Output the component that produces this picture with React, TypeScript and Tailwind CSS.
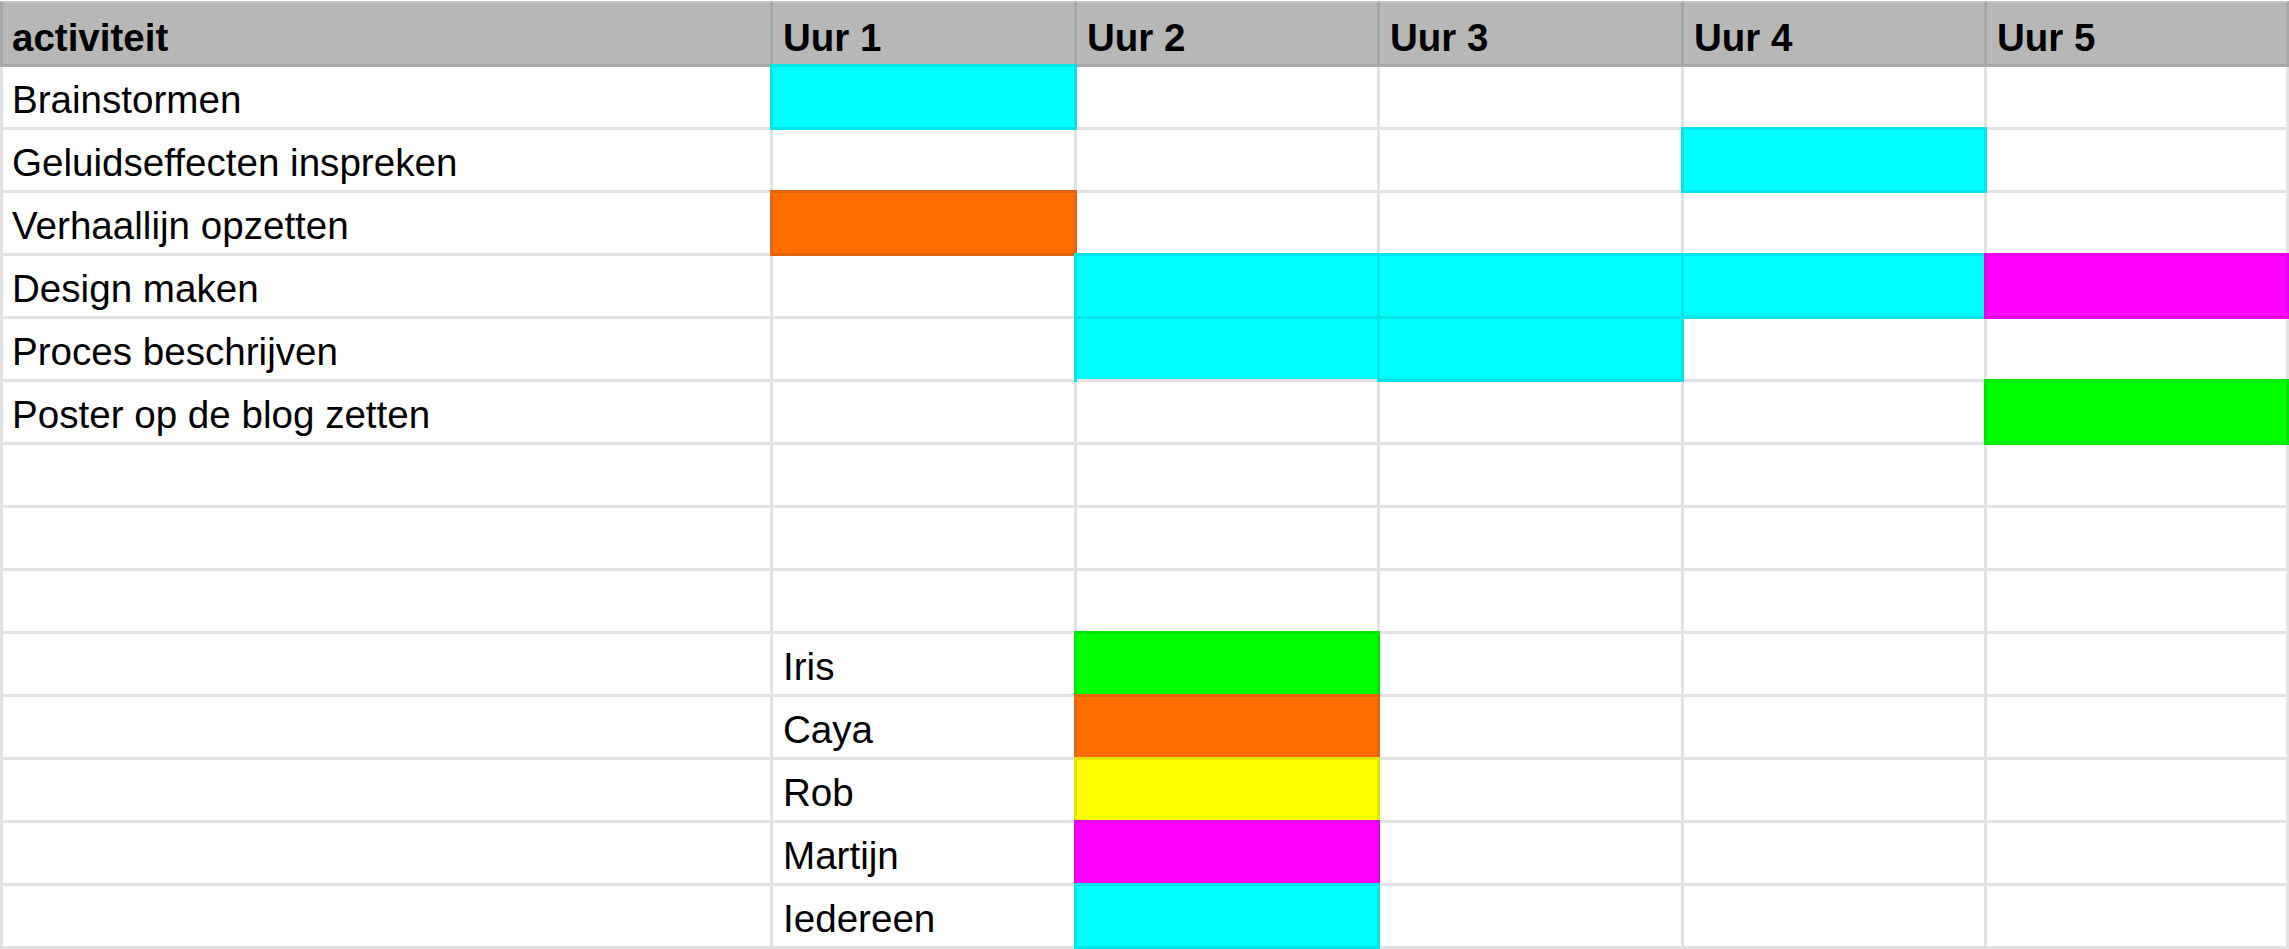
import React from "react";

type Fill = "c" | "cg" | "o" | "g" | "y" | "m" | null;

const fillClass: Record<string, string> = {
  none: "border-[#e2e2e2]",
  c: "bg-[#00ffff] border-[#00e5e5] shadow-[-3px_0_0_0_#00e5e5,0_-3px_0_0_#00e5e5,-3px_-3px_0_0_#00e5e5]",
  cg: "bg-[#00ffff] border-r-[#00e5e5] border-b-[#e2e2e2] shadow-[-3px_0_0_0_#00e5e5,0_-3px_0_0_#00e5e5,-3px_-3px_0_0_#00e5e5]",
  o: "bg-[#ff6d01] border-[#e2640c] shadow-[-3px_0_0_0_#e2640c,0_-3px_0_0_#e2640c,-3px_-3px_0_0_#e2640c]",
  g: "bg-[#00ff00] border-[#00e500] shadow-[-3px_0_0_0_#00e500,0_-3px_0_0_#00e500,-3px_-3px_0_0_#00e500]",
  y: "bg-[#ffff00] border-[#e5e500] shadow-[-3px_0_0_0_#e5e500,0_-3px_0_0_#e5e500,-3px_-3px_0_0_#e5e500]",
  m: "bg-[#ff00ff] border-[#e500e5] shadow-[-3px_0_0_0_#e500e5,0_-3px_0_0_#e500e5,-3px_-3px_0_0_#e500e5]",
};

type Row = { label: string; name?: string; cells: Fill[] };

const rows: Row[] = [
  { label: "Brainstormen", cells: ["c", null, null, null, null] },
  { label: "Geluidseffecten inspreken", cells: [null, null, null, "c", null] },
  { label: "Verhaallijn opzetten", cells: ["o", null, null, null, null] },
  { label: "Design maken", cells: [null, "c", "c", "c", "m"] },
  { label: "Proces beschrijven", cells: [null, "cg", "c", null, null] },
  { label: "Poster op de blog zetten", cells: [null, null, null, null, "g"] },
  { label: "", cells: [null, null, null, null, null] },
  { label: "", cells: [null, null, null, null, null] },
  { label: "", cells: [null, null, null, null, null] },
  { label: "", name: "Iris", cells: [null, "g", null, null, null] },
  { label: "", name: "Caya", cells: [null, "o", null, null, null] },
  { label: "", name: "Rob", cells: [null, "y", null, null, null] },
  { label: "", name: "Martijn", cells: [null, "m", null, null, null] },
  { label: "", name: "Iedereen", cells: [null, "c", null, null, null] },
];

const headers = ["activiteit", "Uur 1", "Uur 2", "Uur 3", "Uur 4", "Uur 5"];

export default function App() {
  return (
    <div className="w-[2289px] h-[949px] overflow-hidden bg-white pt-px text-black font-['Liberation_Sans',Arial,sans-serif]">
      <div className="grid grid-cols-[773px_304px_303px_304px_303px_302px]">
        {headers.map((h, i) => (
          <div
            key={h}
            className={
              i === 0
                ? "h-[66px] bg-[#b7b7b7] border-l-3 border-r-3 border-t-2 border-b-3 border-[#a8a8a8] border-t-[#c6c6c6] flex items-center pt-[8px] pl-[9px] text-[38.5px] font-bold whitespace-nowrap"
                : "h-[66px] bg-[#b7b7b7] border-r-3 border-t-2 border-b-3 border-[#a8a8a8] border-t-[#c6c6c6] flex items-center pt-[8px] pl-[10px] text-[38.5px] font-bold whitespace-nowrap"
            }
          >
            {h}
          </div>
        ))}
        {rows.map((r, ri) => (
          <React.Fragment key={ri}>
            <div className="h-[63px] border-l-3 border-r-3 border-b-3 border-[#e2e2e2] flex items-center pt-[5px] pl-[9px] text-[38.6px] whitespace-nowrap">
              {r.label}
            </div>
            {r.cells.map((c, ci) => (
              <div
                key={ci}
                className={
                  "h-[63px] border-r-3 border-b-3 flex items-center pt-[5px] pl-[10px] text-[38.6px] whitespace-nowrap " +
                  fillClass[c ?? "none"]
                }
              >
                {ci === 0 && r.name ? r.name : ""}
              </div>
            ))}
          </React.Fragment>
        ))}
      </div>
    </div>
  );
}
